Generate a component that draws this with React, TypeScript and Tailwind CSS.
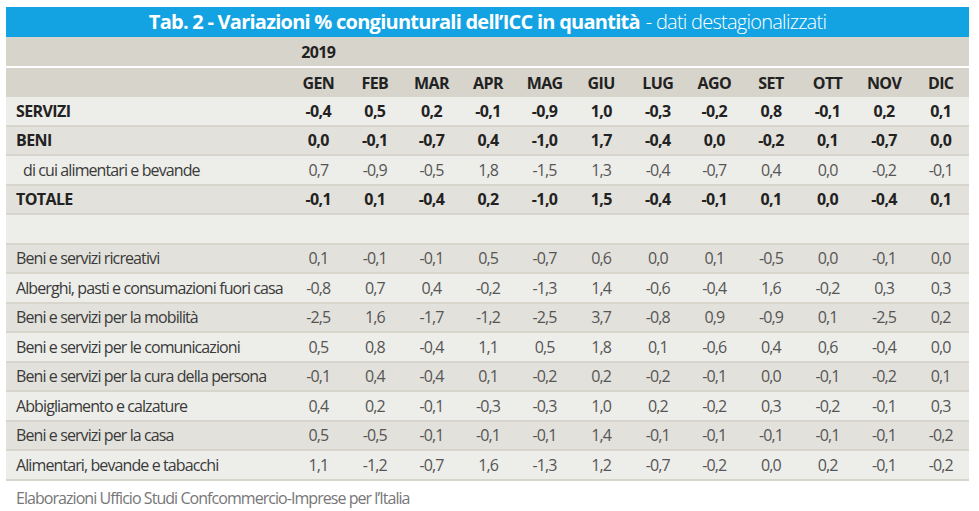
const MONTHS = ["GEN", "FEB", "MAR", "APR", "MAG", "GIU", "LUG", "AGO", "SET", "OTT", "NOV", "DIC"];

type Row = { label: string; values: string[]; bold?: boolean; indent?: boolean };

const ROWS: Row[] = [
  { label: "SERVIZI", bold: true, values: ["-0,4", "0,5", "0,2", "-0,1", "-0,9", "1,0", "-0,3", "-0,2", "0,8", "-0,1", "0,2", "0,1"] },
  { label: "BENI", bold: true, values: ["0,0", "-0,1", "-0,7", "0,4", "-1,0", "1,7", "-0,4", "0,0", "-0,2", "0,1", "-0,7", "0,0"] },
  { label: "di cui alimentari e bevande", indent: true, values: ["0,7", "-0,9", "-0,5", "1,8", "-1,5", "1,3", "-0,4", "-0,7", "0,4", "0,0", "-0,2", "-0,1"] },
  { label: "TOTALE", bold: true, values: ["-0,1", "0,1", "-0,4", "0,2", "-1,0", "1,5", "-0,4", "-0,1", "0,1", "0,0", "-0,4", "0,1"] },
  { label: "", values: [] },
  { label: "Beni e servizi ricreativi", values: ["0,1", "-0,1", "-0,1", "0,5", "-0,7", "0,6", "0,0", "0,1", "-0,5", "0,0", "-0,1", "0,0"] },
  { label: "Alberghi, pasti e consumazioni fuori casa", values: ["-0,8", "0,7", "0,4", "-0,2", "-1,3", "1,4", "-0,6", "-0,4", "1,6", "-0,2", "0,3", "0,3"] },
  { label: "Beni e servizi per la mobilità", values: ["-2,5", "1,6", "-1,7", "-1,2", "-2,5", "3,7", "-0,8", "0,9", "-0,9", "0,1", "-2,5", "0,2"] },
  { label: "Beni e servizi per le comunicazioni", values: ["0,5", "0,8", "-0,4", "1,1", "0,5", "1,8", "0,1", "-0,6", "0,4", "0,6", "-0,4", "0,0"] },
  { label: "Beni e servizi per la cura della persona", values: ["-0,1", "0,4", "-0,4", "0,1", "-0,2", "0,2", "-0,2", "-0,1", "0,0", "-0,1", "-0,2", "0,1"] },
  { label: "Abbigliamento e calzature", values: ["0,4", "0,2", "-0,1", "-0,3", "-0,3", "1,0", "0,2", "-0,2", "0,3", "-0,2", "-0,1", "0,3"] },
  { label: "Beni e servizi per la casa", values: ["0,5", "-0,5", "-0,1", "-0,1", "-0,1", "1,4", "-0,1", "-0,1", "-0,1", "-0,1", "-0,1", "-0,2"] },
  { label: "Alimentari, bevande e tabacchi", values: ["1,1", "-1,2", "-0,7", "1,6", "-1,3", "1,2", "-0,7", "-0,2", "0,0", "0,2", "-0,1", "-0,2"] },
];

const grid = "grid grid-cols-[284px_repeat(12,minmax(0,1fr))] items-center";

export default function App() {
  return (
    <div className="min-h-[511px] w-[979px] bg-white pl-[6px] pt-[7px] font-['Open_Sans',sans-serif] text-[16px] tracking-[-0.9px] text-[#333]">
      <div className="w-[963px]">
        {/* title bar */}
        <div className="flex h-[30px] items-center justify-center bg-[#14a3e2] text-[20px] leading-none tracking-[-0.75px] text-white">
          <span className="font-bold">Tab. 2 - Variazioni % congiunturali dell’ICC in quantità</span>
          <span className="ml-[6px] font-light">- dati destagionalizzati</span>
        </div>

        {/* header */}
        <div className={`${grid} h-[31px] border-b-2 border-white bg-[#d7d4cb] font-bold tracking-[-0.6px] text-[#222]`}>
          <div />
          <div className="text-center">2019</div>
        </div>
        <div className={`${grid} h-[29px] bg-[#d7d4cb] font-bold tracking-[-0.6px] text-[#222]`}>
          <div />
          {MONTHS.map((m) => (
            <div key={m} className="text-center">
              {m}
            </div>
          ))}
        </div>

        {/* body */}
        {ROWS.map((row, i) => (
          <div
            key={i}
            className={`${grid} h-[29.5px] border-b-2 border-[#d8d5cd] ${i % 2 === 0 ? "bg-[#edede9]" : "bg-[#e3e1db]"} ${
              row.bold ? "font-bold tracking-[-0.6px] text-[#222]" : "font-normal text-[#3a3a3a]"
            }`}
          >
            <div className={row.indent ? "pl-[17px]" : "pl-[10px]"}>{row.label}</div>
            {row.values.map((v, j) => (
              <div key={j} className={row.bold ? "text-center" : "text-center text-[#555]"}>
                {v}
              </div>
            ))}
          </div>
        ))}

        <p className="mt-[5px] pl-[10px] tracking-[-0.95px] text-[#777]">
          Elaborazioni Ufficio Studi Confcommercio-Imprese per l’Italia
        </p>
      </div>
    </div>
  );
}
